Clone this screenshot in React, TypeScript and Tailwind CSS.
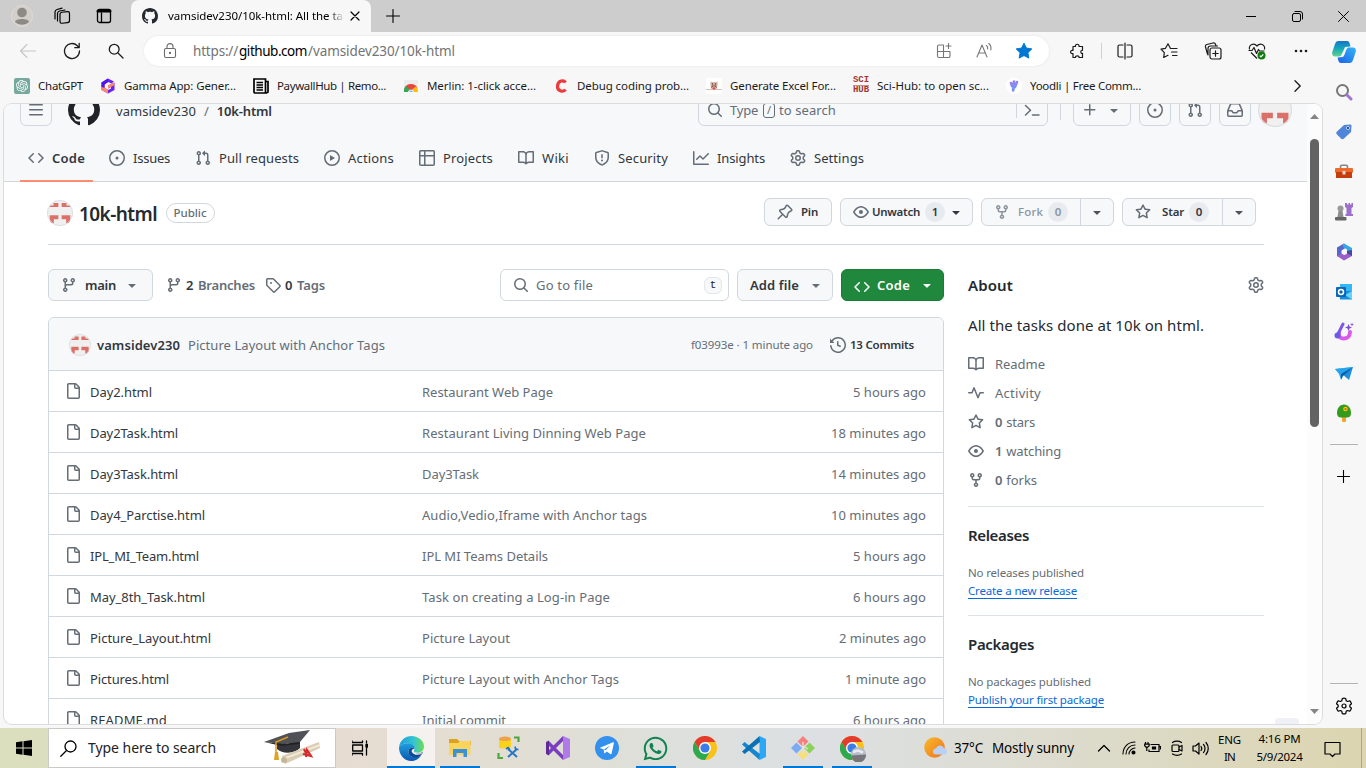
import { useLayoutEffect, useRef, useState } from "react";
import type { ReactNode } from "react";
import { FaWhatsapp } from "react-icons/fa";
import { SiOpenai } from "react-icons/si";

/* Label whose letter spacing is adjusted so that it fills its designed width. */
function Fit({ w, className = "", children }: { w: number; className?: string; children: string }) {
  const ref = useRef<HTMLSpanElement>(null);
  const [spacing, setSpacing] = useState(0);
  useLayoutEffect(() => {
    if (ref.current) {
      const natural = ref.current.getBoundingClientRect().width;
      setSpacing((w - natural) / children.length);
    }
  }, [w, children]);
  return (
    <span ref={ref} className={"inline-block shrink-0 pr-px whitespace-pre " + className} style={{ letterSpacing: spacing }}>
      {children}
    </span>
  );
}

const paths = {
  code: "m11.28 3.22 4.25 4.25a.75.75 0 0 1 0 1.06l-4.25 4.25a.749.749 0 0 1-1.275-.326.749.749 0 0 1 .215-.734L13.94 8l-3.72-3.72a.749.749 0 0 1 .326-1.275.749.749 0 0 1 .734.215Zm-6.56 0a.751.751 0 0 1 1.042.018.751.751 0 0 1 .018 1.042L2.06 8l3.72 3.72a.749.749 0 0 1-.326 1.275.749.749 0 0 1-.734-.215L.47 8.53a.75.75 0 0 1 0-1.06Z",
  issue: "M8 9.5a1.5 1.5 0 1 0 0-3 1.5 1.5 0 0 0 0 3ZM8 0a8 8 0 1 1 0 16A8 8 0 0 1 8 0ZM1.5 8a6.5 6.5 0 1 0 13 0 6.5 6.5 0 0 0-13 0Z",
  pull: "M1.5 3.25a2.25 2.25 0 1 1 3 2.122v5.256a2.251 2.251 0 1 1-1.5 0V5.372A2.25 2.25 0 0 1 1.5 3.25Zm5.677-.177L9.573.677A.25.25 0 0 1 10 .854V2.5h1A2.5 2.5 0 0 1 13.5 5v5.628a2.251 2.251 0 1 1-1.5 0V5a1 1 0 0 0-1-1h-1v1.646a.25.25 0 0 1-.427.177L7.177 3.427a.25.25 0 0 1 0-.354ZM3.75 2.5a.75.75 0 1 0 0 1.5.75.75 0 0 0 0-1.5Zm0 9.5a.75.75 0 1 0 0 1.5.75.75 0 0 0 0-1.5Zm8.25.75a.75.75 0 1 0 1.5 0 .75.75 0 0 0-1.5 0Z",
  play: "M8 0a8 8 0 1 1 0 16A8 8 0 0 1 8 0ZM1.5 8a6.5 6.5 0 1 0 13 0 6.5 6.5 0 0 0-13 0Zm4.879-2.773 4.264 2.559a.25.25 0 0 1 0 .428l-4.264 2.559A.25.25 0 0 1 6 10.559V5.442a.25.25 0 0 1 .379-.215Z",
  table: "M0 1.75C0 .784.784 0 1.75 0h12.5C15.216 0 16 .784 16 1.75v12.5A1.75 1.75 0 0 1 14.25 16H1.75A1.75 1.75 0 0 1 0 14.25ZM6.5 6.5v8h7.75a.25.25 0 0 0 .25-.25V6.5Zm8-1.5V1.75a.25.25 0 0 0-.25-.25H6.5V5Zm-13 1.5v7.75c0 .138.112.25.25.25H5v-8ZM5 5V1.5H1.75a.25.25 0 0 0-.25.25V5Z",
  book: "M0 1.75A.75.75 0 0 1 .75 1h4.253c1.227 0 2.317.59 3 1.501A3.743 3.743 0 0 1 11.006 1h4.245a.75.75 0 0 1 .75.75v10.5a.75.75 0 0 1-.75.75h-4.507a2.25 2.25 0 0 0-1.591.659l-.622.621a.75.75 0 0 1-1.06 0l-.622-.621A2.25 2.25 0 0 0 5.258 13H.75a.75.75 0 0 1-.75-.75Zm7.251 10.324.004-5.073-.002-2.253A2.25 2.25 0 0 0 5.003 2.5H1.5v9h3.757a3.75 3.75 0 0 1 1.994.574ZM8.755 4.75l-.004 7.322a3.752 3.752 0 0 1 1.992-.572H14.5v-9h-3.495a2.25 2.25 0 0 0-2.25 2.25Z",
  shield: "M7.467.133a1.748 1.748 0 0 1 1.066 0l5.25 1.68A1.75 1.75 0 0 1 15 3.48V7c0 1.566-.32 3.182-1.303 4.682-.983 1.498-2.585 2.813-5.032 3.855a1.697 1.697 0 0 1-1.33 0c-2.447-1.042-4.049-2.357-5.032-3.855C1.32 10.182 1 8.566 1 7V3.48a1.755 1.755 0 0 1 1.217-1.667Zm.61 1.429a.25.25 0 0 0-.153 0l-5.25 1.68a.25.25 0 0 0-.174.238V7c0 1.358.275 2.666 1.057 3.86.784 1.194 2.121 2.34 4.366 3.297a.196.196 0 0 0 .154 0c2.245-.956 3.582-2.104 4.366-3.298C13.225 9.666 13.5 8.36 13.5 7V3.48a.251.251 0 0 0-.174-.237l-5.25-1.68ZM8.75 4.75v3a.75.75 0 0 1-1.5 0v-3a.75.75 0 0 1 1.5 0ZM9 10.5a1 1 0 1 1-2 0 1 1 0 0 1 2 0Z",
  graph: "M1.5 1.75V13.5h13.75a.75.75 0 0 1 0 1.5H.75a.75.75 0 0 1-.75-.75V1.75a.75.75 0 0 1 1.5 0Zm14.28 2.53-5.25 5.25a.75.75 0 0 1-1.06 0L7 7.06 4.28 9.78a.751.751 0 0 1-1.042-.018.751.751 0 0 1-.018-1.042l3.25-3.25a.75.75 0 0 1 1.06 0L10 7.94l4.72-4.72a.751.751 0 0 1 1.042.018.751.751 0 0 1 .018 1.042Z",
  gear: "M8 0a8.2 8.2 0 0 1 .701.031C9.444.095 9.99.645 10.16 1.29l.288 1.107c.018.066.079.158.212.224.231.114.454.243.668.386.123.082.233.09.299.071l1.103-.303c.644-.176 1.392.021 1.82.63.27.385.506.792.704 1.218.315.675.111 1.422-.364 1.891l-.814.806c-.049.048-.098.147-.088.294.016.257.016.515 0 .772-.01.147.038.246.088.294l.814.806c.475.469.679 1.216.364 1.891a7.977 7.977 0 0 1-.704 1.217c-.428.61-1.176.807-1.82.63l-1.102-.302c-.067-.019-.177-.011-.3.071a5.909 5.909 0 0 1-.668.386c-.133.066-.194.158-.211.224l-.29 1.106c-.168.646-.715 1.196-1.458 1.26a8.006 8.006 0 0 1-1.402 0c-.743-.064-1.289-.614-1.458-1.26l-.289-1.106c-.018-.066-.079-.158-.212-.224a5.738 5.738 0 0 1-.668-.386c-.123-.082-.233-.09-.299-.071l-1.103.303c-.644.176-1.392-.021-1.82-.63a8.12 8.12 0 0 1-.704-1.218c-.315-.675-.111-1.422.363-1.891l.815-.806c.05-.048.098-.147.088-.294a6.214 6.214 0 0 1 0-.772c.01-.147-.038-.246-.088-.294l-.815-.806C.635 6.045.431 5.298.746 4.623a7.92 7.92 0 0 1 .704-1.217c.428-.61 1.176-.807 1.82-.63l1.102.302c.067.019.177.011.3-.071.214-.143.437-.272.668-.386.133-.066.194-.158.211-.224l.29-1.106C6.009.645 6.556.095 7.299.03 7.53.01 7.764 0 8 0Zm-.571 1.525c-.036.003-.108.036-.137.146l-.289 1.105c-.147.561-.549.967-.998 1.189-.173.086-.34.183-.5.29-.417.278-.97.423-1.529.27l-1.103-.303c-.109-.03-.175.016-.195.045-.22.312-.412.644-.573.99-.014.031-.021.11.059.19l.815.806c.411.406.562.957.53 1.456a4.709 4.709 0 0 0 0 .582c.032.499-.119 1.05-.53 1.456l-.815.806c-.081.08-.073.159-.059.19.162.346.353.677.573.989.02.03.085.076.195.046l1.102-.303c.56-.153 1.113-.008 1.53.27.161.107.328.204.501.29.447.222.85.629.997 1.189l.289 1.105c.029.109.101.143.137.146a6.6 6.6 0 0 0 1.142 0c.036-.003.108-.036.137-.146l.289-1.105c.147-.561.549-.967.998-1.189.173-.086.34-.183.5-.29.417-.278.97-.423 1.529-.27l1.103.303c.109.029.175-.016.195-.045.22-.313.411-.644.573-.99.014-.031.021-.11-.059-.19l-.815-.806c-.411-.406-.562-.957-.53-1.456a4.709 4.709 0 0 0 0-.582c-.032-.499.119-1.05.53-1.456l.815-.806c.081-.08.073-.159.059-.19a6.464 6.464 0 0 0-.573-.989c-.02-.03-.085-.076-.195-.046l-1.102.303c-.56.153-1.113.008-1.53-.27a4.44 4.44 0 0 0-.501-.29c-.447-.222-.85-.629-.997-1.189l-.289-1.105c-.029-.11-.101-.143-.137-.146a6.6 6.6 0 0 0-1.142 0ZM11 8a3 3 0 1 1-6 0 3 3 0 0 1 6 0ZM9.5 8a1.5 1.5 0 1 0-3.001.001A1.5 1.5 0 0 0 9.5 8Z",
  eye: "M8 2c1.981 0 3.671.992 4.933 2.078 1.27 1.091 2.187 2.345 2.637 3.023a1.62 1.62 0 0 1 0 1.798c-.45.678-1.367 1.932-2.637 3.023C11.67 13.008 9.981 14 8 14c-1.981 0-3.671-.992-4.933-2.078C1.797 10.83.88 9.576.43 8.898a1.62 1.62 0 0 1 0-1.798c.45-.677 1.367-1.931 2.637-3.022C4.33 2.992 6.019 2 8 2ZM1.679 7.932a.12.12 0 0 0 0 .136c.411.622 1.241 1.75 2.366 2.717C5.176 11.758 6.527 12.5 8 12.5c1.473 0 2.825-.742 3.955-1.715 1.124-.967 1.954-2.096 2.366-2.717a.12.12 0 0 0 0-.136c-.412-.621-1.242-1.75-2.366-2.717C10.824 4.242 9.473 3.5 8 3.5c-1.473 0-2.825.742-3.955 1.715-1.124.967-1.954 2.096-2.366 2.717ZM8 10a2 2 0 1 1-.001-3.999A2 2 0 0 1 8 10Z",
  fork: "M5 5.372v.878c0 .414.336.75.75.75h4.5a.75.75 0 0 0 .75-.75v-.878a2.25 2.25 0 1 1 1.5 0v.878a2.25 2.25 0 0 1-2.25 2.25h-1.5v2.128a2.251 2.251 0 1 1-1.5 0V8.5h-1.5A2.25 2.25 0 0 1 3.5 6.25v-.878a2.25 2.25 0 1 1 1.5 0ZM5 3.25a.75.75 0 1 0-1.5 0 .75.75 0 0 0 1.5 0Zm6.75.75a.75.75 0 1 0 0-1.5.75.75 0 0 0 0 1.5Zm-3 8.75a.75.75 0 1 0-1.5 0 .75.75 0 0 0 1.5 0Z",
  star: "M8 .25a.75.75 0 0 1 .673.418l1.882 3.815 4.21.612a.75.75 0 0 1 .416 1.279l-3.046 2.97.719 4.192a.751.751 0 0 1-1.088.791L8 12.347l-3.766 1.98a.75.75 0 0 1-1.088-.79l.72-4.194L.818 6.374a.75.75 0 0 1 .416-1.28l4.21-.611L7.327.668A.75.75 0 0 1 8 .25Zm0 2.445L6.615 5.5a.75.75 0 0 1-.564.41l-3.097.45 2.24 2.184a.75.75 0 0 1 .216.664l-.528 3.084 2.769-1.456a.75.75 0 0 1 .698 0l2.77 1.456-.53-3.084a.75.75 0 0 1 .216-.664l2.24-2.183-3.096-.45a.75.75 0 0 1-.564-.41L8 2.694Z",
  branch: "M9.5 3.25a2.25 2.25 0 1 1 3 2.122V6A2.5 2.5 0 0 1 10 8.5H6a1 1 0 0 0-1 1v1.128a2.251 2.251 0 1 1-1.5 0V5.372a2.25 2.25 0 1 1 1.5 0v1.836A2.493 2.493 0 0 1 6 7h4a1 1 0 0 0 1-1v-.628A2.25 2.25 0 0 1 9.5 3.25Zm-6 0a.75.75 0 1 0 1.5 0 .75.75 0 0 0-1.5 0Zm8.25-.75a.75.75 0 1 0 0 1.5.75.75 0 0 0 0-1.5ZM4.25 12a.75.75 0 1 0 0 1.5.75.75 0 0 0 0-1.5Z",
  tag: "M1 7.775V2.75C1 1.784 1.784 1 2.75 1h5.025c.464 0 .91.184 1.238.513l6.25 6.25a1.75 1.75 0 0 1 0 2.474l-5.026 5.026a1.75 1.75 0 0 1-2.474 0l-6.25-6.25A1.752 1.752 0 0 1 1 7.775Zm1.5 0c0 .066.026.13.073.177l6.25 6.25a.25.25 0 0 0 .354 0l5.025-5.025a.25.25 0 0 0 0-.354l-6.25-6.25a.25.25 0 0 0-.177-.073H2.75a.25.25 0 0 0-.25.25ZM6 5a1 1 0 1 1 0 2 1 1 0 0 1 0-2Z",
  search: "M10.68 11.74a6 6 0 0 1-7.922-8.982 6 6 0 0 1 8.982 7.922l3.04 3.04a.749.749 0 0 1-.326 1.275.749.749 0 0 1-.734-.215ZM11.5 7a4.499 4.499 0 1 0-8.997 0A4.499 4.499 0 0 0 11.5 7Z",
  history: "m.427 1.927 1.215 1.215a8.002 8.002 0 1 1-1.6 5.685.75.75 0 1 1 1.493-.154 6.5 6.5 0 1 0 1.18-4.458l1.358 1.358A.25.25 0 0 1 3.896 6H.25A.25.25 0 0 1 0 5.75V2.104a.25.25 0 0 1 .427-.177ZM7.75 4a.75.75 0 0 1 .75.75v2.992l2.028.812a.75.75 0 0 1-.557 1.392l-2.5-1A.751.751 0 0 1 7 8.25v-3.5A.75.75 0 0 1 7.75 4Z",
  file: "M2 1.75C2 .784 2.784 0 3.75 0h6.586c.464 0 .909.184 1.237.513l2.914 2.914c.329.328.513.773.513 1.237v9.586A1.75 1.75 0 0 1 13.25 16h-9.5A1.75 1.75 0 0 1 2 14.25Zm1.75-.25a.25.25 0 0 0-.25.25v12.5c0 .138.112.25.25.25h9.5a.25.25 0 0 0 .25-.25V6h-2.75A1.75 1.75 0 0 1 9 4.25V1.5Zm6.75.062V4.25c0 .138.112.25.25.25h2.688l-.011-.013-2.914-2.914-.013-.011Z",
  pulse: "M6 2c.306 0 .582.187.696.471L10 10.731l1.304-3.26A.751.751 0 0 1 12 7h3.25a.75.75 0 0 1 0 1.5h-2.742l-1.812 4.528a.751.751 0 0 1-1.392 0L6 4.77 4.696 8.03A.75.75 0 0 1 4 8.5H.75a.75.75 0 0 1 0-1.5h2.742l1.812-4.529A.751.751 0 0 1 6 2Z",
  bars: "M1 2.75A.75.75 0 0 1 1.75 2h12.5a.75.75 0 0 1 0 1.5H1.75A.75.75 0 0 1 1 2.75Zm0 5A.75.75 0 0 1 1.75 7h12.5a.75.75 0 0 1 0 1.5H1.75A.75.75 0 0 1 1 7.75ZM1.75 12h12.5a.75.75 0 0 1 0 1.5H1.75a.75.75 0 0 1 0-1.5Z",
  github: "M8 0c4.42 0 8 3.58 8 8a8.013 8.013 0 0 1-5.45 7.59c-.4.08-.55-.17-.55-.38 0-.27.01-1.13.01-2.2 0-.75-.25-1.23-.54-1.48 1.78-.2 3.65-.88 3.65-3.95 0-.88-.31-1.59-.82-2.15.08-.2.36-1.02-.08-2.12 0 0-.67-.22-2.2.82-.64-.18-1.32-.27-2-.27-.68 0-1.36.09-2 .27-1.53-1.03-2.2-.82-2.2-.82-.44 1.1-.16 1.92-.08 2.12-.51.56-.82 1.28-.82 2.15 0 3.06 1.86 3.75 3.64 3.95-.23.2-.44.55-.51 1.07-.46.21-1.61.55-2.33-.66-.15-.24-.6-.83-1.23-.82-.67.01-.27.38.01.53.34.19.73.9.82 1.13.16.45.68 1.31 2.69.94 0 .67.01 1.3.01 1.49 0 .21-.15.45-.55.38A7.995 7.995 0 0 1 0 8c0-4.42 3.58-8 8-8Z",
  pin: "m11.294.984 3.722 3.722a1.75 1.75 0 0 1-.504 2.826l-1.327.613a3.089 3.089 0 0 0-1.707 2.084l-.584 2.454c-.317 1.332-1.972 1.8-2.94.832L5.75 11.311 1.78 15.28a.749.749 0 1 1-1.06-1.06l3.969-3.97-2.204-2.204c-.968-.968-.5-2.623.832-2.94l2.454-.584a3.08 3.08 0 0 0 2.084-1.707l.613-1.327a1.75 1.75 0 0 1 2.826-.504ZM6.283 9.723l2.732 2.731a.25.25 0 0 0 .42-.119l.584-2.454a4.586 4.586 0 0 1 2.537-3.098l1.328-.613a.25.25 0 0 0 .072-.404l-3.722-3.722a.25.25 0 0 0-.404.072l-.613 1.328a4.584 4.584 0 0 1-3.098 2.537l-2.454.584a.25.25 0 0 0-.119.42l2.731 2.732Z",
  down: "m4.427 7.427 3.396 3.396a.25.25 0 0 0 .354 0l3.396-3.396A.25.25 0 0 0 11.396 7H4.604a.25.25 0 0 0-.177.427Z",
  inbox: "M2.8 2.06A1.75 1.75 0 0 1 4.41 1h7.18c.7 0 1.333.417 1.61 1.06l2.74 6.395c.04.093.06.194.06.295v4.5A1.75 1.75 0 0 1 14.25 15H1.75A1.75 1.75 0 0 1 0 13.25v-4.5c0-.101.02-.202.06-.295Zm1.61.44a.25.25 0 0 0-.23.152L1.887 8H4.75a.75.75 0 0 1 .6.3L6.625 10h2.75l1.275-1.7a.75.75 0 0 1 .6-.3h2.863L11.82 2.652a.25.25 0 0 0-.23-.152Zm10.09 7h-2.875l-1.275 1.7a.75.75 0 0 1-.6.3h-3.5a.75.75 0 0 1-.6-.3L4.375 9.5H1.5v3.75c0 .138.112.25.25.25h12.5a.25.25 0 0 0 .25-.25Z",
  plus: "M7.75 2a.75.75 0 0 1 .75.75V7h4.25a.75.75 0 0 1 0 1.5H8.5v4.25a.75.75 0 0 1-1.5 0V8.5H2.75a.75.75 0 0 1 0-1.5H7V2.75A.75.75 0 0 1 7.75 2Z",
};

function Oct({ name, className = "", size = 16 }: { name: keyof typeof paths; className?: string; size?: number }) {
  return (
    <svg width={size} height={size} viewBox="0 0 16 16" className={"shrink-0 " + className} fill="currentColor" fillRule="evenodd">
      <path d={paths[name]} />
    </svg>
  );
}

function Line({ size = 20, vb = 20, className = "", sw = 1.1, children }: { size?: number; vb?: number; className?: string; sw?: number; children: ReactNode }) {
  return (
    <svg width={size} height={size} viewBox={`0 0 ${vb} ${vb}`} className={"shrink-0 " + className} fill="none" stroke="currentColor" strokeWidth={sw} strokeLinecap="round" strokeLinejoin="round">
      {children}
    </svg>
  );
}

function Cell({ className = "w-11", children }: { className?: string; children: ReactNode }) {
  return <div className={"flex shrink-0 items-center justify-center " + className}>{children}</div>;
}

function Identicon({ size, className = "" }: { size: number; className?: string }) {
  return (
    <svg width={size} height={size} viewBox="0 0 24 24" className={"shrink-0 " + className}>
      <clipPath id="round"><circle cx="12" cy="12" r="12" /></clipPath>
      <g clipPath="url(#round)">
        <rect width="24" height="24" fill="#f0f0f0" />
        <path d="M6 2.800h4.500v3.700H2.500V5H6ZM18 2.800h-4.500v3.700h8V5H18ZM2.500 14h8v3.800H6.300v3.700H2.500ZM21.500 14h-8v3.800h4.200v3.700h3.800Z" fill="#db7068" />
      </g>
      <circle cx="12" cy="12" r="11.600" fill="none" stroke="#dadde0" strokeWidth=".8" />
    </svg>
  );
}

function TitleBar() {
  return (
    <div className="flex h-8 shrink-0 items-stretch bg-[#cdcdcd] text-black">
      <Cell className="w-11">
        <svg width="22" height="22" viewBox="0 0 22 22">
          <circle cx="11" cy="11" r="10.500" fill="#d2cfcb" stroke="#dedbd8" />
          <circle cx="11" cy="7.500" r="4.800" fill="#8d8a86" />
          <path d="M4 17c0-4 14-4 14 0a10 10 0 0 1-14 0Z" fill="#8d8a86" />
        </svg>
      </Cell>
      <Cell className="w-9">
        <Line size={18} vb={18} sw={1.2}>
          <rect x="7" y="5" width="9.500" height="11" rx="2" transform="skewY(-6) translate(0 1.200)" />
          <path d="M4.500 14V6.500c0-1.500.5-2 2-2.500l5.500-1M2 12V5c0-1.500.5-2 2-2.500L9 1.200" />
        </Line>
      </Cell>
      <Cell className="w-12">
        <Line size={16} vb={16} sw={1.3}>
          <rect x="1.500" y="1.500" width="13" height="13" rx="2" />
          <path d="M2 3h12" strokeWidth="3" /><path d="M5.500 5v9" />
        </Line>
      </Cell>
      <div className="ml-[3px] flex w-60 items-center rounded-t-lg bg-[#f7f7f7]">
        <Oct name="github" className="ml-[11px] text-[#24292f]" />
        <div className="ml-[10px] w-[176px] overflow-hidden bg-gradient-to-r from-black from-90% to-[#f7f7f7] bg-clip-text text-[11.5px] leading-4 text-transparent">
          <Fit w={176}>vamsidev230/10k-html: All the ta</Fit>
        </div>
        <Line size={10} vb={10} className="ml-[6px]" sw={1.2}><path d="M1 1l8 8M9 1L1 9" /></Line>
      </div>
      <Cell className="w-11"><Line size={14} vb={14} sw={1.1}><path d="M7 .5v13M.5 7h13" /></Line></Cell>
      <div className="flex-1" />
      <Cell className="w-[46px]"><Line size={10} vb={10} sw={1}><path d="M0 5.500h10" /></Line></Cell>
      <Cell className="w-[46px]"><Line size={11} vb={11} sw={1}><rect x=".5" y="2.500" width="8" height="8" rx="1.500" /><path d="M3 .5h5a2.500 2.500 0 0 1 2.500 2.500v5" /></Line></Cell>
      <Cell className="w-[46px]"><Line size={11} vb={11} sw={1}><path d="M.5.5l10 10M10.500.5l-10 10" /></Line></Cell>
    </div>
  );
}

function Toolbar() {
  return (
    <div className="flex h-10 shrink-0 items-center pb-[2px] pl-[6px] text-[#1b1b1b]">
      <Cell><Line size={18} vb={18} className="text-[#c6c6c6]"><path d="M1.500 9h15M8 2.500L1.500 9 8 15.500" /></Line></Cell>
      <Cell><Line size={18} vb={18} sw={1.3}><path d="M16.500 9a7.500 7.500 0 1 1-2.200-5.300L16 5.500M16.200 1.300v4.400h-4.400" /></Line></Cell>
      <Cell><Line size={16} vb={16} sw={1.3}><circle cx="6.200" cy="6.200" r="4.900" /><path d="M10 10l5 5" /></Line></Cell>
      <div className="ml-[6px] flex h-[30px] w-[905px] shrink-0 items-center rounded-full bg-white shadow-[0_0_3px_rgba(0,0,0,0.08)]">
        <Line size={16} vb={16} className="ml-[18px] text-[#6b6b6b]"><rect x="2.500" y="5.500" width="11" height="9" rx="1.500" /><path d="M5 5.500V3.600a3 3 0 0 1 6 0v1.900" /><circle cx="8" cy="10" r=".6" fill="currentColor" /></Line>
        <div className="ml-[15px] flex text-[13.500px] leading-5 text-[#737373]">
          <Fit w={46}>https://</Fit>
          <Fit w={69} className="text-black">github.com</Fit>
          <Fit w={148}>/vamsidev230/10k-html</Fit>
        </div>
        <div className="ml-auto mr-[5px] flex">
          <Cell className="w-10">
            <Line size={16} vb={16} className="text-[#767676]"><path d="M7.500 2H3a1.500 1.500 0 0 0-1.500 1.500V13A1.500 1.500 0 0 0 3 14.500h9.500A1.500 1.500 0 0 0 14 13V8.500H1.500M7.500 2v12.500M12.500.5v5M10 3h5" /></Line>
          </Cell>
          <Cell className="w-10">
            <Line size={18} vb={18} className="text-[#767676]"><path d="M2 15L7 3l5 12M3.700 11h6.600M11.500 3.500c1 .8 1.400 2 1.200 3.500M13.800 1.500c2 1.700 2.600 4 2 6.500" /></Line>
          </Cell>
          <Cell className="w-10"><svg width="18" height="18" viewBox="0 0 18 18"><path d="M9 1.200l2.400 4.900 5.400.8-3.900 3.800.9 5.400L9 13.500l-4.800 2.600.9-5.400L1.200 6.900l5.400-.8Z" fill="#0078d4" stroke="#0078d4" strokeLinejoin="round" /></svg></Cell>
        </div>
      </div>
      <Cell className="ml-[6px] w-11"><Line size={17} vb={17} sw={1.2}><path d="M4 3.500h2.500c-.8-3 4.300-3 3.500 0h3.500v3.800c-2.200-.6-2.200 3.700 0 3v4.200H10c.6-2.300-4-2.300-3.500 0H4v-4c-3.200.7-3.200-3.700 0-3Z" /></Line></Cell>
      <div className="ml-[2px] h-4 w-px shrink-0 bg-[#d0d0d0]" />
      <Cell className="ml-px w-11"><Line size={18} vb={18} sw={1.2}><path d="M9 1v16M7 3H3.500A1.500 1.500 0 0 0 2 4.500v9A1.500 1.500 0 0 0 3.500 15H7M11 3h3.500A1.500 1.500 0 0 1 16 4.500v9a1.500 1.500 0 0 1-1.500 1.500H11" /></Line></Cell>
      <Cell><Line size={18} vb={18} sw={1.2}><path d="M12 6.500h-1.500L8 1.800 5.500 6.300l-4.500.9 3.300 3.500-.6 4.800L8 13.300M12 6.500h5M11.500 10h5.500M12.500 13.500h4.500" /></Line></Cell>
      <Cell><Line size={18} vb={18} sw={1.2}><rect x="6" y="6" width="11" height="11" rx="2" /><path d="M11.500 8.800v5.400M8.800 11.500h5.400M3.500 12l-2-7c-.3-1.300.2-2.200 1.300-2.500L9 1c1.400-.3 2.200.3 2.600 1.500l.4 1.200M4 13V6.500A2.500 2.500 0 0 1 6.500 4h7" /></Line></Cell>
      <Cell>
        <svg width="18" height="18" viewBox="0 0 18 18" fill="none" stroke="currentColor" strokeWidth="1.200" strokeLinejoin="round">
          <path d="M1.500 7.500C.5 2.500 6 .5 9 4c3-3.500 8.500-1.500 7.500 3.500M3 10.500l6 6M.5 8.500H4l2-3 2.500 6 2-4 1 1.500h5" />
          <circle cx="13.500" cy="13.500" r="4" fill="#107c10" stroke="none" /><path d="M11.800 13.700l1.200 1.200 2.300-2.600" stroke="#fff" />
        </svg>
      </Cell>
      <Cell><svg width="14" height="4" viewBox="0 0 14 4" fill="currentColor"><circle cx="2" cy="2" r="1.300" /><circle cx="7" cy="2" r="1.300" /><circle cx="12" cy="2" r="1.300" /></svg></Cell>
    </div>
  );
}

function Bookmark({ slot, w, text, children }: { slot: string; w: number; text: string; children: ReactNode }) {
  return (
    <div className={"flex shrink-0 items-center " + slot}>
      <div className="flex h-4 w-4 shrink-0 items-center justify-center">{children}</div>
      <Fit w={w} className="ml-2">{text}</Fit>
    </div>
  );
}

function Bookmarks() {
  return (
    <div className="flex h-8 shrink-0 items-center pb-[5px] pl-[14px] text-[11.500px] leading-4 text-[#1b1b1b]">
      <Bookmark slot="w-[86px]" w={46} text="ChatGPT">
        <div className="flex h-4 w-4 items-center justify-center rounded-[2px] bg-[#75a99c] text-white"><SiOpenai size={12} /></div>
      </Bookmark>
      <Bookmark slot="w-[153px]" w={113} text="Gamma App: Gener...">
        <svg width="16" height="16" viewBox="0 0 16 16"><path d="M8 .5l6 3-2.500 2L8 4 4.500 6.500v3L8 12l3-1.500V9L8 10.500v-3l6.500-3v7.500L8 15.500 1.500 12V4.500Z" fill="#6a24f0" /><path d="M8 7.500l6.500-3V7L8 10.500ZM1.500 9l3 .5L8 12v3.500L1.500 12Z" fill="#ff8a63" /><path d="M1.500 4.500L8 .5V4L4.500 6.500v3l-3-.5Z" fill="#4b17ea" /></svg>
      </Bookmark>
      <Bookmark slot="w-[150px]" w={110} text="PaywallHub | Remo...">
        <svg width="16" height="16" viewBox="0 0 16 16" fill="none" stroke="#000" strokeWidth="1.700"><path d="M1 1h11.500v14H2a1 1 0 0 1-1-1ZM12.500 3.500H15V14l-1.500 1h-2" /><path d="M3.500 4.500H10M3.500 7H10M3.500 9.500H10M3.500 12H10" strokeWidth="1.400" /></svg>
      </Bookmark>
      <Bookmark slot="w-[150px]" w={110} text="Merlin: 1-click acce...">
        <svg width="16" height="16" viewBox="0 0 16 16"><path d="M1 2h14v8H1Z" fill="#ececec" /><path d="M1.500 10.500a7 7 0 0 1 13 0L8 12Z" fill="#e8453c" /><path d="M1 14v-2c0-1.500.7-3 2-4l3.500 3.500L5 14Z" fill="#35a853" /><path d="M13 8.500a7 7 0 0 1 2 5.500h-4l-1.500-3Z" fill="#fbbc05" /><path d="M5.500 14a2.600 2.600 0 0 1 5 0Z" fill="#4285f4" stroke="#fff" strokeWidth=".8" /></svg>
      </Bookmark>
      <Bookmark slot="w-[153px]" w={113} text="Debug coding prob...">
        <svg width="16" height="16" viewBox="0 0 16 16"><path d="M12.500 4.500C11 2 5 2 4.500 8s6.500 6 8 3.500" fill="none" stroke="#ec3a3d" strokeWidth="3.200" /></svg>
      </Bookmark>
      <Bookmark slot="w-[147px]" w={107} text="Generate Excel For...">
        <svg width="16" height="16" viewBox="0 0 16 16"><rect width="16" height="16" fill="#fff" /><path d="M4.500 3.500l1.500.7h4l1.500-.7v4.500L10.500 11h-5l-1-3Z" fill="#d5ab9c" /><path d="M6.500 5v2.500M9.500 5v2.500M5 9.500l3-2 3 2" stroke="#8a6257" fill="none" /><path d="M0 11.500h16" stroke="#d9bcb6" /><circle cx="8" cy="10.500" r="1.200" fill="#e0504c" /></svg>
      </Bookmark>
      <Bookmark slot="w-[153px]" w={113} text="Sci-Hub: to open sc...">
        <div className="flex flex-col items-center font-['Liberation_Mono'] text-[9px] leading-[7px] font-bold text-[#a4342e]"><span className="border-b border-[#c98d8a] pb-px">SCI</span><span className="pt-px">HUB</span></div>
      </Bookmark>
      <Bookmark slot="w-[136px]" w={112} text="Yoodli | Free Comm...">
        <svg width="16" height="16" viewBox="0 0 16 16"><circle cx="8" cy="8" r="8" fill="#fff" /><path d="M5 5l1 3M8 3.500L7 12.500M11 4L9 9" stroke="#8f86f2" strokeWidth="2.600" strokeLinecap="round" /><path d="M8 8l-.5 4" stroke="#5fa1ee" strokeWidth="2" strokeLinecap="round" /></svg>
      </Bookmark>
      <Line size={12} vb={12} className="ml-[149px]" sw={1.3}><path d="M4 .8L9.200 6 4 11.200" /></Line>
    </div>
  );
}

const tabs: { icon: keyof typeof paths; text: string; w: number }[] = [
  { icon: "issue", text: "Issues", w: 38 },
  { icon: "pull", text: "Pull requests", w: 81 },
  { icon: "play", text: "Actions", w: 47 },
  { icon: "table", text: "Projects", w: 51 },
  { icon: "book", text: "Wiki", w: 28 },
  { icon: "shield", text: "Security", w: 51 },
  { icon: "graph", text: "Insights", w: 49 },
  { icon: "gear", text: "Settings", w: 51 },
];

const headBtn = "flex h-8 shrink-0 items-center justify-center rounded-md border border-[#d0d7de] text-[#656d76]";

function RepoHeader() {
  return (
    <div className="shrink-0 border-b border-[#d0d7de] bg-[#f6f8fa]">
      <div className="-mt-[10px] flex h-8 items-center pl-4">
        <div className={headBtn + " w-8"}><Oct name="bars" /></div>
        <Oct name="github" size={32} className="ml-4 text-[#1f2328]" />
        <div className="ml-4 flex pt-px text-[13px] leading-3 text-[#32373d]">
          <Fit w={81}>vamsidev230</Fit>
          <span className="ml-[7px] text-[#656d76]">/</span>
          <Fit w={56} className="ml-[8px] font-semibold">10k-html</Fit>
        </div>
        <div className="ml-auto flex h-8 w-[350px] items-center rounded-md border border-[#d0d7de] pl-2 text-[13px] leading-3 text-[#656d76]">
          <Oct name="search" />
          <Fit w={29} className="ml-[7px]">Type</Fit>
          <span className="ml-1 flex h-[15px] w-3 items-center justify-center rounded-[3px] border border-[#656d76] text-[11px]">/</span>
          <Fit w={58} className="ml-1">to search</Fit>
          <div className="ml-auto h-4 w-px bg-[#d0d7de]" />
          <Line size={16} vb={16} className="mx-[7px]" sw={1.5}><path d="M1.500 3.500l5 4.700L1.500 13M8.500 13h6.500" /></Line>
        </div>
        <div className="ml-3 h-5 w-px bg-[#d0d7de]" />
        <div className={headBtn + " ml-3 w-[58px] gap-2"}><Oct name="plus" /><Oct name="down" /></div>
        <div className={headBtn + " ml-2 w-8"}><Oct name="issue" /></div>
        <div className={headBtn + " ml-2 w-8"}><Oct name="pull" /></div>
        <div className={headBtn + " ml-2 w-8"}><Oct name="inbox" /></div>
        <Identicon size={34} className="ml-[7px] mr-[15px]" />
      </div>
      <div className="flex h-[55px] pl-4 text-[13px] leading-5 text-[#32373d]">
        <div className="-mb-px flex w-[73px] items-center border-b-2 border-[#fd8c73] pl-2 pt-[10px] pr-2">
          <Oct name="code" className="text-[#656d76]" />
          <Fit w={34} className="ml-2 font-semibold">Code</Fit>
        </div>
        <div className="flex items-center gap-6 pl-4 pt-2">
          {tabs.map((t) => (
            <div key={t.text} className="flex items-center gap-2">
              <Oct name={t.icon} className="text-[#656d76]" />
              <Fit w={t.w}>{t.text}</Fit>
            </div>
          ))}
        </div>
      </div>
    </div>
  );
}

const btn = "flex h-7 items-center rounded-md border border-[#d0d7de] bg-[#f6f8fa] text-[11.500px] font-semibold text-[#32373d]";
const counter = "flex h-5 min-w-5 items-center justify-center rounded-full bg-[#e7eaee]";

function TitleRow() {
  return (
    <div className="mr-[43px] ml-11 flex h-[63px] shrink-0 items-start border-b border-[#d0d7de] pt-4 pr-2">
      <Identicon size={26} className="-ml-px mt-[2px]" />
      <Fit w={79} className="ml-[6px] text-[19px] leading-8 font-semibold text-[#24292f]">10k-html</Fit>
      <span className="ml-2 mt-[5px] flex h-5 w-[49px] items-center justify-center rounded-full border border-[#d0d7de] text-[11.500px] leading-4 font-medium text-[#656d76]"><Fit w={34}>Public</Fit></span>
      <div className="ml-auto flex gap-2">
        <div className={btn + " w-[68px]"}><Oct name="pin" className="ml-[12px] text-[#656d76]" /><Fit w={18} className="ml-2">Pin</Fit></div>
        <div className={btn + " w-[133px]"}>
          <Oct name="eye" className="ml-[12px] text-[#656d76]" /><Fit w={49} className="ml-[3px]">Unwatch</Fit>
          <span className={counter + " ml-[4px]"}>1</span><Oct name="down" className="ml-[3px]" />
        </div>
        <div className={btn + " w-[133px]"}>
          <Oct name="fork" className="ml-[12px] text-[#8c959f]" /><Fit w={26} className="ml-2 font-medium text-[#8c959f]">Fork</Fit>
          <span className={counter + " ml-[4px] text-[#8c959f]"}>0</span>
          <div className="ml-auto flex h-full w-[33px] items-center justify-center border-l border-[#d0d7de] text-[#4d545c]"><Oct name="down" /></div>
        </div>
        <div className={btn + " w-[134px]"}>
          <Oct name="star" className="ml-[12px] text-[#656d76]" /><Fit w={23} className="ml-[11px]">Star</Fit>
          <span className={counter + " ml-[4px]"}>0</span>
          <div className="ml-auto flex h-full w-[33px] items-center justify-center border-l border-[#d0d7de] text-[#4d545c]"><Oct name="down" /></div>
        </div>
      </div>
    </div>
  );
}

const files: [string, number, string, number, string, number][] = [
  ["Day2.html", 63, "Restaurant Web Page", 132, "5 hours ago", 74],
  ["Day2Task.html", 89, "Restaurant Living Dinning Web Page", 225, "18 minutes ago", 96],
  ["Day3Task.html", 89, "Day3Task", 58, "14 minutes ago", 96],
  ["Day4_Parctise.html", 116, "Audio,Vedio,Iframe with Anchor tags", 226, "10 minutes ago", 96],
  ["IPL_MI_Team.html", 110, "IPL MI Teams Details", 127, "5 hours ago", 74],
  ["May_8th_Task.html", 116, "Task on creating a Log-in Page", 189, "6 hours ago", 74],
  ["Picture_Layout.html", 122, "Picture Layout", 89, "2 minutes ago", 88],
  ["Pictures.html", 80, "Picture Layout with Anchor Tags", 198, "1 minute ago", 82],
  ["README.md", 78, "Initial commit", 85, "6 hours ago", 74],
];

const bigBtn = "flex h-8 shrink-0 items-center rounded-md border border-[#d0d7de] bg-[#f6f8fa] font-semibold text-[#32373d]";

function FileArea() {
  return (
    <div className="w-[896px] shrink-0">
      <div className="flex h-8 items-center text-[13px] leading-5">
        <div className={bigBtn + " w-[105px]"}>
          <Oct name="branch" className="ml-[12px] text-[#656d76]" /><Fit w={32} className="ml-2">main</Fit><Oct name="down" className="ml-[7px] text-[#656d76]" />
        </div>
        <div className="ml-[13px] flex items-center font-semibold text-[#656d76]">
          <Oct name="branch" /><Fit w={12} className="ml-1 text-[#32373d]">2 </Fit><Fit w={58}>Branches</Fit>
          <Oct name="tag" className="ml-[9px]" /><Fit w={12} className="ml-1 text-[#32373d]">0 </Fit><Fit w={29}>Tags</Fit>
        </div>
        <div className="ml-auto flex h-8 w-[229px] items-center rounded-md border border-[#d0d7de] text-[#656d76]">
          <Oct name="search" className="ml-[12px]" /><Fit w={58} className="ml-[7px]">Go to file</Fit>
          <span className="ml-auto mr-[6px] flex h-[17px] w-[18px] items-center justify-center rounded-md border border-[#e3e7eb] bg-[#f6f8fa] font-['Liberation_Mono'] text-[11px] text-[#1f2328]">t</span>
        </div>
        <div className={bigBtn + " ml-2 w-24"}><Fit w={50} className="ml-[12px]">Add file</Fit><Oct name="down" className="ml-2 text-[#656d76]" /></div>
        <div className="ml-2 flex h-8 w-[103px] items-center rounded-md border border-[#1c7b37] bg-[#1f883d] font-semibold text-white">
          <Oct name="code" className="ml-[12px] mt-[3px]" /><Fit w={34} className="ml-[7px]">Code</Fit><Oct name="down" className="ml-2" />
        </div>
      </div>
      <div className="mt-4 rounded-t-md border border-[#d0d7de]">
        <div className="flex h-[52px] items-center rounded-t-md bg-[#f6f8fa] pt-[2px] pl-5 text-[13px] leading-5 text-[#656d76]">
          <Identicon size={22} />
          <Fit w={84} className="ml-[6px] font-semibold text-[#32373d]">vamsidev230</Fit>
          <Fit w={198} className="ml-[7px]">Picture Layout with Anchor Tags</Fit>
          <Fit w={123} className="ml-auto text-[11.500px]">f03993e · 1 minute ago</Fit>
          <Oct name="history" className="ml-4" />
          <Fit w={65} className="ml-[4px] mr-[28px] text-[11.500px] font-semibold text-[#32373d]">13 Commits</Fit>
        </div>
        {files.map(([name, nw, msg, mw, ago, aw]) => (
          <div key={name} className="flex h-[41px] items-center border-t border-[#d0d7de] pl-4 pt-px text-[13px] leading-5 text-[#656d76]">
            <Oct name="file" className="mb-px" />
            <div className="ml-[9px] w-[332px]"><Fit w={nw} className="text-[#32373d]">{name}</Fit></div>
            <Fit w={mw}>{msg}</Fit>
            <Fit w={aw} className="ml-auto mr-4">{ago}</Fit>
          </div>
        ))}
      </div>
    </div>
  );
}

const facts: { icon: keyof typeof paths; n: string; text: string; w: number }[] = [
  { icon: "book", n: "", text: "Readme", w: 51 },
  { icon: "pulse", n: "", text: "Activity", w: 47 },
  { icon: "star", n: "0", text: " stars", w: 33 },
  { icon: "eye", n: "1", text: " watching", w: 59 },
  { icon: "fork", n: "0", text: " forks", w: 35 },
];

function About() {
  return (
    <div className="ml-6 w-[296px] text-[#24292f]">
      <div className="flex h-8 items-center justify-between text-[15px] leading-6 font-semibold">
        <Fit w={46}>About</Fit><Oct name="gear" className="text-[#656d76]" />
      </div>
      <Fit w={237} className="mt-3 text-[15px] leading-6">All the tasks done at 10k on html.</Fit>
      <div className="mt-3 flex flex-col text-[13px] leading-5 text-[#656d76]">
        {facts.map((f) => (
          <div key={f.icon} className="flex h-[29px] items-center">
            <Oct name={f.icon} className="mr-[11px]" />
            {f.n && <Fit w={8} className="font-semibold">{f.n}</Fit>}
            <Fit w={f.w}>{f.text}</Fit>
          </div>
        ))}
      </div>
      <div className="mt-3 h-px bg-[#dde2e7]" />
      <Fit w={62} className="mt-4 text-[15px] leading-6 font-semibold">Releases</Fit>
      <div className="mt-[17px] flex flex-col items-start text-[11.500px] leading-[18px]">
        <Fit w={117} className="text-[#656d76]">No releases published</Fit>
        <Fit w={110} className="text-[#0969da] underline underline-offset-3">Create a new release</Fit>
      </div>
      <div className="mt-[15px] h-px bg-[#dde2e7]" />
      <Fit w={67} className="mt-4 text-[15px] leading-6 font-semibold">Packages</Fit>
      <div className="mt-[17px] flex flex-col items-start text-[11.500px] leading-[18px]">
        <Fit w={124} className="text-[#656d76]">No packages published</Fit>
        <Fit w={137} className="text-[#0969da] underline underline-offset-3">Publish your first package</Fit>
      </div>
    </div>
  );
}

function Sidebar() {
  return (
    <div className="flex w-11 shrink-0 flex-col items-center pr-px">
      <Cell className="h-[39px]">
        <svg width="24" height="24" viewBox="0 0 24 24">
          <defs>
            <linearGradient id="c1" x1="0" y1="0" x2="0" y2="1"><stop offset="0" stopColor="#1a72c8" /><stop offset=".45" stopColor="#12a5bd" /><stop offset="1" stopColor="#62d48c" /></linearGradient>
            <linearGradient id="c2" x1="1" y1="0" x2="0" y2="1"><stop offset="0" stopColor="#35b4f6" /><stop offset="1" stopColor="#1c62e6" /></linearGradient>
          </defs>
          <path d="M6.500 1H15c1.700 0 2.300 1 2.800 3l.7 2.500-5.500.5-2.800 7c-.8 2-1.700 2.500-3.400 2.500H3C.5 16.500-.5 14.500.5 11.500L3 4c.7-2 1.700-3 3.500-3Z" fill="url(#c1)" />
          <path d="M17.500 23H9c-1.700 0-2.300-1-2.800-3l-.7-2.500 5.500-.5 2.800-7c.8-2 1.700-2.500 3.400-2.500H21c2.500 0 3.500 2 2.500 5L21 20c-.7 2-1.700 3-3.500 3Z" fill="url(#c2)" />
          <path d="M13.500 7.500h3c-1.500.5-2 1.500-2.500 3l-1.500 4c-.5 1.500-1.500 2.500-3 2.500h-3c2-.5 2.500-1 3-2.500Z" fill="#f7f7f7" />
        </svg>
      </Cell>
      <div className="flex flex-col items-center pt-px">
        <Cell className="h-10"><svg width="18" height="18" viewBox="0 0 18 18" fill="none"><circle cx="7.500" cy="7.500" r="5.500" stroke="#777" strokeWidth="2" /><path d="M12 12l4 4" stroke="#a274d6" strokeWidth="3" strokeLinecap="round" /></svg></Cell>
        <Cell className="h-10"><svg width="18" height="18" viewBox="0 0 18 18"><path d="M9 2l6-.5c1 0 1.500.5 1.500 1.500L16 9l-7 6.500c-1 1-2 1-3 0L2 11.500c-1-1-1-2 0-3Z" fill="#4f86dc" /><circle cx="13" cy="5" r="1.600" fill="#263f78" stroke="#b8d0f5" /></svg></Cell>
        <Cell className="h-10"><svg width="18" height="18" viewBox="0 0 18 18"><path d="M5.500 5V3.500c0-.8.500-1.300 1.300-1.300h4.400c.8 0 1.300.5 1.300 1.300V5" fill="none" stroke="#858585" strokeWidth="1.600" /><rect x="0" y="5" width="18" height="5" rx="1" fill="#ef6a2e" /><path d="M1 9h16v6H1Z" fill="#c63d0c" /><rect x="7.500" y="8" width="3" height="3.500" fill="#ddd" /></svg></Cell>
        <Cell className="h-10"><svg width="18" height="18" viewBox="0 0 18 18"><circle cx="5.500" cy="5.500" r="3" fill="#999" /><path d="M3.500 8h4l1 6h-6Z" fill="#8d8d8d" /><rect x="0" y="14" width="11.500" height="3.500" rx="1" fill="#666" /><path d="M10 0h2v1.500h1.500V0H15v1.500h1.500V0H18v4l-1.500 1v6H18v2h-7.500v-2h1V5L10 4Z" fill="#9c6fce" /></svg></Cell>
        <Cell className="h-10"><svg width="18" height="18" viewBox="0 0 18 18"><path d="M9 .5L2 4.500v9L6.500 11V7.500L12 4Z" fill="#5567cc" /><path d="M8 1L9 .5l8 4.500v7L12 9V6.500L8 4Z" fill="#35a6e6" /><path d="M2 13l4.500-2.500 3 1.500L12 10.500 17 8.500v4.500L9 17.500Z" fill="#9a5fc8" /><path d="M17 7v6l-5-2.500V8Z" fill="#4a4a9c" /><circle cx="9.300" cy="9" r="2.500" fill="#f7f7f7" /></svg></Cell>
        <Cell className="h-10"><svg width="18" height="18" viewBox="0 0 18 18"><rect x="5" y="1" width="12" height="8" fill="#35b8f1" /><path d="M4 8h13v8.500H5Z" fill="#1490df" /><path d="M17 8v8.500L10 12Z" fill="#65d3fa" /><rect x="1" y="4" width="10" height="10" rx="1" fill="#0f64b8" /><circle cx="6" cy="9" r="2.500" fill="none" stroke="#fff" strokeWidth="1.500" /></svg></Cell>
        <Cell className="h-10"><svg width="20" height="20" viewBox="0 0 20 20"><path d="M5 11c-2 7 11 8 11-1" fill="none" stroke="#d95be8" strokeWidth="4" strokeLinecap="round" /><path d="M9 2L4 12" stroke="#7b58e8" strokeWidth="3" strokeLinecap="round" /><circle cx="3.500" cy="13.500" r="3" fill="#6d5be6" /><path d="M14.500 2l1 2.500 2.500 1-2.500 1-1 2.500-1-2.500-2.500-1 2.500-1ZM18 .5l.5 1.500 1.500.5-1.500.5L18 4.500 17.500 3 16 2.500l1.500-.5Z" fill="#7b4ee0" /></svg></Cell>
        <Cell className="h-10 pt-1"><svg width="18" height="14" viewBox="0 0 18 14"><path d="M0 2L18 0 6 7Z" fill="#3cb4f0" /><path d="M18 0L14 13 6 6Z" fill="#1c8fe0" /><path d="M0 2L18 0 6 7v6L4 7Z" fill="#27a5ea" /><path d="M6 7l12-7L8 9 6 13Z" fill="#0b5aa6" /></svg></Cell>
        <Cell className="h-10 pt-[2px]"><svg width="18" height="18" viewBox="0 0 18 18"><rect x="7" y="12" width="4" height="6" rx="1" fill="#f2a52c" /><path d="M2 9c0-5 3-8.500 7-8.500S16 4 16 9c0 3-1.500 4.500-4 4.500H6c-2.500 0-4-1.500-4-4.500Z" fill="#359b1c" /><circle cx="10.500" cy="5" r="2.300" fill="#f5c518" /><circle cx="10.500" cy="5" r="1.100" fill="#d85e10" /></svg></Cell>
      </div>
      <div className="mt-[12px] h-px w-7 bg-[#b4b4b4]" />
      <Line size={13} vb={13} className="mt-[25px]" sw={1.1}><path d="M6.500.5v12M.5 6.500h12" /></Line>
      <div className="mt-auto h-px w-7 bg-[#b4b4b4]" />
      <Line size={18} vb={18} className="mt-[13px] mb-[13px]" sw={1.2}>
        <circle cx="9" cy="9" r="2" />
        <path d="M7.300 1.500q1.700-.6 3.400 0l.5 2.300 1.300.7 2.200-.7q1.300 1.200 1.800 3L14.800 8.300v1.500l1.700 1.400q-.5 1.800-1.800 3l-2.200-.7-1.300.8-.5 2.300q-1.700.5-3.400 0l-.5-2.300-1.300-.8-2.200.7q-1.300-1.200-1.800-3l1.700-1.400V8.300L1.500 6.800q.5-1.800 1.800-3l2.200.7 1.300-.7Z" />
      </Line>
    </div>
  );
}

function Chrome({ size }: { size: number }) {
  return (
    <svg width={size} height={size} viewBox="0 0 24 24">
      <circle cx="12" cy="12" r="12" fill="#fbc116" />
      <path d="M1.600 6A12 12 0 0 1 22.400 6H12L7 15Z" fill="#e33b2e" />
      <path d="M1.600 6A12 12 0 0 0 12 24l5.200-9L12 17 6.800 15Z" fill="#2da94f" />
      <circle cx="12" cy="12" r="6" fill="#fff" /><circle cx="12" cy="12" r="4.600" fill="#3a7de8" />
    </svg>
  );
}

function TaskApp({ on, active, children }: { on?: boolean; active?: boolean; children: ReactNode }) {
  return (
    <div className={"flex w-[49px] shrink-0 flex-col items-center " + (active ? "pr-px" : "")}>
      <div className={"flex flex-1 items-center justify-center " + (active ? "w-12 bg-[#f5f1ee]" : "w-10")}>{children}</div>
      <div className={"-mt-[2px] h-[2px] " + (active ? "w-12 bg-[#0078d7]" : on ? "w-10 bg-[#0078d7]" : "w-10")} />
    </div>
  );
}

function Taskbar() {
  return (
    <div className="flex h-10 shrink-0 bg-gradient-to-r from-[#dbdfbd] via-[#dde0e3] via-60% to-[#dcd5b0] text-black">
      <div className="flex w-full bg-gradient-to-r from-transparent from-5% via-[#e7dcd2] via-25% to-transparent to-50%">
        <Cell className="w-12"><svg width="16" height="16" viewBox="0 0 16 16"><path d="M0 2.200L6.500 1.300v6.200H0ZM7.500 1.200L16 0v7.500H7.500ZM0 8.500h6.500v6.200L0 13.800ZM7.500 8.500H16V16l-8.500-1.200Z" /></svg></Cell>
        <div className="flex w-72 shrink-0 items-center border border-[#c9c9c6] bg-white pl-[11px]">
          <Line size={17} vb={17} sw={1.3}><circle cx="10.500" cy="6.500" r="5.500" /><path d="M6.500 10.500L.8 16.200" /></Line>
          <Fit w={129} className="ml-[11px] text-[14px] leading-5 text-[#222]">Type here to search</Fit>
          <svg width="60" height="38" viewBox="0 0 60 38" className="ml-[46px]">
            <path d="M14 12v8c5 5 18 5 23-1V9L25 15Z" fill="#33353a" />
            <path d="M1 13L26 4 47 1 37 13 20 15Z" fill="#505257" /><path d="M1 13l19 2 17-2-1 2-17 2Z" fill="#222" />
            <path d="M25 8L13 13v13" fill="none" stroke="#d99a1e" strokeWidth="1.500" /><path d="M12 23h3l1 8h-5Z" fill="#e0a224" />
            <path d="M19 27L56 13l1 6-35 16Z" fill="#d8ccb2" /><path d="M20 30L57 16" stroke="#f1e9d6" strokeWidth="2" />
            <path d="M41 20l3 6M40 25l8 2-4-6-1 7" fill="none" stroke="#d32b30" strokeWidth="2.200" /><circle cx="21" cy="31" r="3" fill="#c5b794" />
          </svg>
        </div>
        <Cell className="w-12">
          <Line size={16} vb={16} sw={1.300}><path d="M0 2.500V.8M10.500.8v1.700M0 2.500h10.500M.7 5h9.800v6H.7ZM0 13.500h10.500M0 13.500v1.700M10.500 13.500v1.700M14.500 1v2M14.500 8v7" /><path d="M14 4.500h1.500V7H14Z" fill="currentColor" /></Line>
        </Cell>
        <div className="ml-[3px] flex">
          <TaskApp active>
            <svg width="25" height="25" viewBox="0 0 24 24">
              <defs>
                <linearGradient id="e1" x1="0" x2="1"><stop offset="0" stopColor="#1a9be0" /><stop offset=".6" stopColor="#36c6d0" /><stop offset="1" stopColor="#6fdc4c" /></linearGradient>
                <linearGradient id="e2" x1="0" y1="0" x2="0" y2="1"><stop offset="0" stopColor="#1ba0de" /><stop offset="1" stopColor="#0f58b0" /></linearGradient>
              </defs>
              <path d="M0 11C1 4 6 0 12 0c7 0 12 5 12 10 0 4-3 6-6 6-3 0-4.500-1-3.500-2.500C16 11 13 7 8 7 4 7 1 9 0 11Z" fill="url(#e1)" />
              <path d="M0 11C1 9 4 7 8 7c4 0 7 2 7 5-3-2-6 0-6 3 0 4 5 7 12 4-2 3.500-6 5-9 5C5 24 0 18 0 11Z" fill="url(#e2)" />
              <path d="M9 15c0-3 3-5 6-3 0 1-1 1.500-.5 3 .8 2 5 2.500 8.500 0-1 4-5 6-8 5.500C11 20 9 18 9 15Z" fill="#0d4c94" />
              <path d="M15 12c0 1-1 1.500-.5 3 .8 2 5 2.500 8.500.500-2 3-8 3.500-10.500 0-1-1.500 0-3 2.500-3.500Z" fill="#f5f1ee" />
            </svg>
          </TaskApp>
          <div className="-ml-px flex">
            <TaskApp on><svg width="22" height="20" viewBox="0 0 22 20"><path d="M0 1h8l2 2h12v4H0Z" fill="#dea21d" /><path d="M0 5h9l2-2h10.500v14H0Z" fill="#fbd55b" /><path d="M4 11h14v8h-3.500v-4h-7v4H4Z" fill="#3b91d8" /></svg></TaskApp>
            <TaskApp><svg width="24" height="24" viewBox="0 0 24 24"><path d="M2 2v9c0 2 10 2 12 0V2Z" fill="#fbd21c" /><ellipse cx="8" cy="2.800" rx="6" ry="2.300" fill="#eda24c" /><path d="M17 1.500h4.500V6M1.500 17v5H6" fill="none" stroke="#4ca83c" strokeWidth="2.200" /><path d="M11 13l9 8M20 13l-9 8" stroke="#2477c4" strokeWidth="2" /><path d="M18 10.500l.5 2.500 3 .5M9 13l2-1.500 2 2" fill="none" stroke="#2477c4" strokeWidth="1.600" /></svg></TaskApp>
            <TaskApp><svg width="24" height="24" viewBox="0 0 24 24"><path d="M17 0l7 3v18l-7 3Z" fill="#b07be8" /><path d="M17 0v24L0 7l3-2 14 14V5L3 19l-3-2Z" fill="#7a3fc0" /><path d="M0 6l3-1.500V19.500L0 18Z" fill="#5e2a9a" /></svg></TaskApp>
            <TaskApp><svg width="24" height="24" viewBox="0 0 24 24"><circle cx="12" cy="12" r="12" fill="#3390ec" /><path d="M4.500 12L18 6.300c.7-.2 1 .2.9.8l-2.300 10.400c-.2.8-.8.9-1.300.5l-3.500-2.600-1.700 1.700c-.4.4-.8.3-.9-.3l-.6-3.600-3.900-1.200Z" fill="#fff" /><path d="M9 13.500l6.500-4.200-5 5Z" fill="#3390ec" /></svg></TaskApp>
            <TaskApp on><FaWhatsapp size={27} color="#128251" /></TaskApp>
            <TaskApp><Chrome size={24} /></TaskApp>
            <TaskApp><svg width="24" height="24" viewBox="0 0 24 24"><path d="M17.500 0L24 3v18l-6.500 3Z" fill="#2aa8f5" /><path d="M17.500 24L0 8.500 2.500 6 18 18Z" fill="#1686d0" /><path d="M0 15.500L17.500 0 18 6 2.500 18Z" fill="#0b70b4" /></svg></TaskApp>
            <TaskApp on><svg width="24" height="24" viewBox="0 0 24 24"><path d="M12 0l5.500 5.500L12 11 6.500 5.500Z" fill="#f5807d" /><path d="M18.500 6.500L24 12l-5.500 5.500L13 12Z" fill="#8cd15a" /><path d="M5.500 6.500L11 12l-5.500 5.500L0 12Z" fill="#7bacf2" /><path d="M12 13l5.500 5.500L12 24l-5.500-5.500Z" fill="#f7dd7b" /><path d="M12 6v12M12 10l5 3" stroke="#e3e3e3" strokeWidth="1.300" /></svg></TaskApp>
            <TaskApp on>
              <div className="relative">
                <Chrome size={24} />
                <svg width="15" height="15" viewBox="0 0 15 15" className="absolute -right-[2px] -bottom-[2px]"><circle cx="7.500" cy="7.500" r="7.500" fill="#b5bdca" /><path d="M0 8.500L15 7.500a7.500 7.500 0 0 1-15 1Z" fill="#77767b" /><path d="M2 5l5-1.500 5 2" stroke="#e9edf1" strokeWidth="2.500" fill="none" /></svg>
              </div>
            </TaskApp>
          </div>
        </div>
        <div className="ml-auto flex items-center text-[13.500px] leading-5">
          <svg width="24" height="22" viewBox="0 0 24 22"><defs><linearGradient id="sun" x1="0" y1="0" x2="1" y2="1"><stop offset="0" stopColor="#f7bc2c" /><stop offset="1" stopColor="#f0701c" /></linearGradient></defs><circle cx="10.500" cy="10.500" r="10.300" fill="url(#sun)" /><path d="M12 17.500a3 3 0 0 1 0-6 4.300 4.300 0 0 1 8-.300 3.200 3.200 0 0 1 .5 6.300Z" fill="#b9d1f4" /></svg>
          <Fit w={30} className="ml-[6px]">37°C</Fit>
          <Fit w={83} className="ml-[8px]">Mostly sunny</Fit>
          <Line size={14} vb={14} className="ml-[22px]" sw={1.300}><path d="M1.500 10L7 4.500 12.500 10" /></Line>
          <Line size={14} vb={14} className="ml-[11px]" sw={1.100}><path d="M1 13C1 6 6 1 13 1M4 13c0-5 4-9 9-9M7 13c0-3 3-6 6-6" /><circle cx="11.500" cy="11.500" r="1.500" fill="currentColor" /></Line>
          <svg width="17" height="14" viewBox="0 0 17 14" className="ml-[8px]" fill="none" stroke="#000" strokeWidth="1.200"><path d="M6.500 3.500h8.500v7H5V8.500M15.500 5.500h1v3M1.500 1v2M4 1v2M.7 3.200h4.500v1.500l-1.500 1.500H2L.7 4.700ZM2.800 6v4" /><path d="M8.500 6h3v2h-3Z" fill="#000" /></svg>
          <Line size={16} vb={16} className="ml-[8px]" sw={1.200}><rect x="3" y="5" width="7" height="6.500" rx="1" /><path d="M10 7l3-1.500v5.500l-3-1.500M3.500 2.500C6 .7 10 .7 12.500 2.500M3.500 14c2.500 1.500 6.500 1.500 9 0" /></Line>
          <Line size={17} vb={17} className="ml-[7px]" sw={1.200}><path d="M1 6v5h2.500L7 14V3L3.500 6ZM9 6.500c.8 1 .8 3 0 4M11.500 4.500c2 2 2 6 0 8M14 2.500c3 3.500 3 8.500 0 12" /></Line>
          <div className="ml-[9px] flex w-6 flex-col items-center pb-px text-[11.500px] leading-[17px]"><Fit w={24}>ENG</Fit><Fit w={12}>IN</Fit></div>
          <div className="ml-[14px] flex w-[48px] flex-col items-center text-[11.500px] leading-[18px]"><Fit w={43}>4:16 PM</Fit><Fit w={47}>5/9/2024</Fit></div>
          <Line size={17} vb={17} className="ml-[20px] mt-[2px] mr-[20px]" sw={1.200}><path d="M1 1.500h15v11.500h-5L8.500 15.500 6 13H1Z" /></Line>
          <div className="h-10 w-[5px] border-l border-[#a9a68e]" />
        </div>
      </div>
    </div>
  );
}

export default function App() {
  return (
    <div className="flex h-[768px] w-[1366px] flex-col overflow-hidden bg-[#f7f7f7] font-['Noto_Sans','Open_Sans',sans-serif]">
      <TitleBar />
      <div className="flex h-[696px] shrink-0">
        <div className="flex w-[1322px] shrink-0 flex-col">
          <Toolbar />
          <Bookmarks />
          <div className="relative ml-1 flex h-[620px] overflow-hidden rounded-lg bg-white ring-1 ring-[#dcdcdc]">
            <div className="flex w-[1303px] shrink-0 flex-col">
              <RepoHeader />
              <TitleRow />
              <div className="ml-11 mt-6 flex"><FileArea /><About /></div>
            </div>
            <div className="flex flex-1 flex-col items-center bg-[#fcfcfc]">
              <svg width="9" height="5" viewBox="0 0 9 5" className="mt-[10px]"><path d="M0 5L4.500 0 9 5Z" fill="#858585" /></svg>
              <div className="mt-5 h-[288px] w-[9px] rounded-full bg-[#636363]" />
              <svg width="9" height="5" viewBox="0 0 9 5" className="mt-auto mb-[10px]"><path d="M0 0L4.500 5 9 0Z" fill="#858585" /></svg>
            </div>
            <div className="absolute right-[23px] bottom-0 h-[6px] w-6 rounded-t-sm bg-[#eff1f6]" />
          </div>
        </div>
        <Sidebar />
      </div>
      <Taskbar />
    </div>
  );
}
